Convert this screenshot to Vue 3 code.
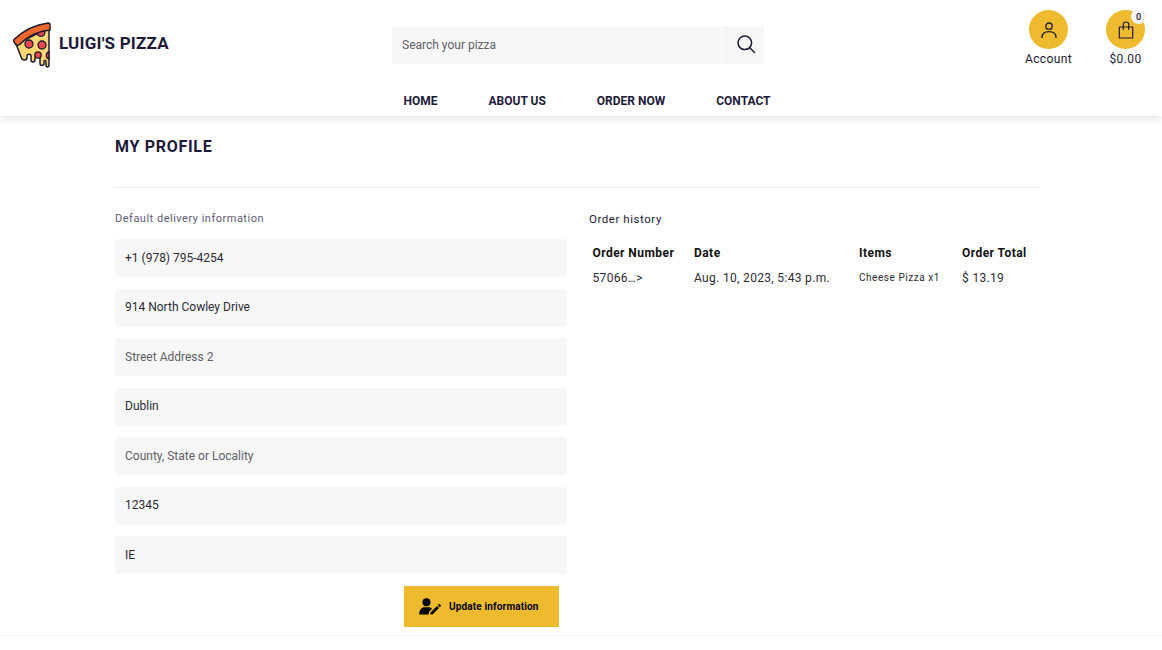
<script setup>
import { ref } from "vue"

const fields = ref([
  { value: "+1 (978) 795-4254", placeholder: "Phone number" },
  { value: "914 North Cowley Drive", placeholder: "Street Address 1" },
  { value: "", placeholder: "Street Address 2" },
  { value: "Dublin", placeholder: "Town or City" },
  { value: "", placeholder: "County, State or Locality" },
  { value: "12345", placeholder: "Postal Code" },
  { value: "IE", placeholder: "Country" },
])

const orders = [
  { number: "57066…>", date: "Aug. 10, 2023, 5:43 p.m.", items: "Cheese Pizza x1", total: "$ 13.19" },
]
</script>

<template>
  <div class="page">
    <header class="header">
      <div class="topRow">
        <a class="logo">
          <svg class="logoIcon" viewBox="0 0 38 46" width="38" height="46">
            <path d="M3 22 L36 6 V43 C36 45.5 33 45.5 33 43 V40 C33 37.5 31 37.5 31 40 V41.5 C31 44 27 44 27 41.5 V36 C27 33 22 33 22 36 V38 C22 40.5 18 40.5 18 38 V34 C18 31.5 14 31.5 14 34 V36 C14 38.5 9 38.5 8.5 36 Z" fill="#fbd872" stroke="#1e1b33" stroke-width="1.5" stroke-linejoin="round" />
            <circle cx="28" cy="10.5" r="3.8" fill="#e8484f" stroke="#1e1b33" stroke-width="1.3" />
            <circle cx="16" cy="22" r="4" fill="#e8484f" stroke="#1e1b33" stroke-width="1.3" />
            <circle cx="29" cy="23" r="4" fill="#e8484f" stroke="#1e1b33" stroke-width="1.3" />
            <circle cx="25" cy="33" r="3.2" fill="#e8484f" stroke="#1e1b33" stroke-width="1.3" />
            <path d="M36 30 A3.6 3.6 0 0 0 36 37 Z" fill="#e8484f" stroke="#1e1b33" stroke-width="1.3" />
            <path d="M1 17.5 C10 9 23 2.5 35 1 Q37 1 37 3 V8 C26 9 15 14 6.5 22.5 C5.5 23.5 4 23.5 3 22.5 L1 20 Q0.5 18.5 1 17.5 Z" fill="#f0672c" stroke="#1e1b33" stroke-width="1.5" stroke-linejoin="round" />
          </svg>
          <span class="logoText">LUIGI'S PIZZA</span>
        </a>

        <form class="search" @submit.prevent>
          <input class="searchInput" type="text" placeholder="Search your pizza" />
          <button class="searchBtn" type="button" aria-label="Search">
            <svg viewBox="0 0 20 20" width="20" height="20" fill="none" stroke="#1e1b33" stroke-width="1.5" stroke-linecap="round">
              <circle cx="8.8" cy="8.8" r="6.8" />
              <path d="M13.8 13.8 L18.5 18.5" />
            </svg>
          </button>
        </form>

        <div class="userLinks">
          <a class="userLink">
            <span class="circle">
              <svg viewBox="0 0 18 18" width="18" height="18" fill="none" stroke="#1e1b33" stroke-width="1.3" stroke-linecap="round">
                <circle cx="9" cy="5.2" r="3.2" />
                <path d="M2 16.5 C2 12.5 5 10.6 9 10.6 C13 10.6 16 12.5 16 16.5" />
              </svg>
            </span>
            <span class="linkText">Account</span>
          </a>
          <a class="userLink">
            <span class="circle">
              <svg viewBox="0 0 18 18" width="18" height="18" fill="none" stroke="#1e1b33" stroke-width="1.2" stroke-linejoin="round">
                <path d="M2.3 6 H15.7 V17 H2.3 Z" />
                <path d="M6.3 9 V3.6 C6.3 2 7.4 1 9 1 C10.6 1 11.7 2 11.7 3.6 V9" />
              </svg>
              <span class="badge">0</span>
            </span>
            <span class="linkText">$0.00</span>
          </a>
        </div>
      </div>

      <nav class="nav">
        <a>HOME</a>
        <a>ABOUT US</a>
        <a>ORDER NOW</a>
        <a>CONTACT</a>
      </nav>
    </header>

    <main class="main">
      <h2 class="title">MY PROFILE</h2>
      <hr class="divider" />
      <div class="columns">
        <section class="left">
          <p class="leftLabel">Default delivery information</p>
          <form class="profileForm" @submit.prevent>
            <input
              v-for="f in fields"
              :key="f.placeholder"
              v-model="f.value"
              class="field"
              type="text"
              :placeholder="f.placeholder"
            />
            <div class="btnRow">
              <button class="updateBtn" type="submit">
                <svg viewBox="0 0 22 17" width="22" height="17" fill="#000">
                  <circle cx="7.5" cy="4.2" r="4" />
                  <path d="M0.2 16.5 C0.2 12 2.6 9.3 5.5 9.3 L9.5 9.3 C10.8 9.3 12 9.8 13 10.7 L10.2 13.6 L9.6 16.5 Z" />
                  <path d="M11.3 16.5 L11.8 14.2 L18 8 L20 10 L13.8 16.2 Z" />
                  <path d="M18.8 7.2 L19.8 6.2 C20.1 5.9 20.5 5.9 20.8 6.2 L21.8 7.2 C22 7.5 22 7.9 21.8 8.2 L20.8 9.2 Z" />
                </svg>
                <span>Update information</span>
              </button>
            </div>
          </form>
        </section>

        <section class="right">
          <p class="rightLabel">Order history</p>
          <table class="orders">
            <thead>
              <tr>
                <th class="colNumber">Order Number</th>
                <th class="colDate">Date</th>
                <th class="colItems">Items</th>
                <th>Order Total</th>
              </tr>
            </thead>
            <tbody>
              <tr v-for="o in orders" :key="o.number">
                <td>{{ o.number }}</td>
                <td>{{ o.date }}</td>
                <td class="itemsCell">{{ o.items }}</td>
                <td>{{ o.total }}</td>
              </tr>
            </tbody>
          </table>
        </section>
      </div>
    </main>
    <div class="footerLine"></div>
  </div>
</template>

<style>
html, body {
  margin: 0;
  background: #fff;
}
</style>

<style scoped>
.page {
  height: 650px;
  overflow: hidden;
  font-family: Roboto, "Liberation Sans", sans-serif;
  color: #1c1a38;
  background: #fff;
}
.header {
  height: 116px;
  box-sizing: border-box;
  box-shadow: 0 2px 10px rgba(0, 0, 0, 0.12);
  position: relative;
  background: #fff;
}
.topRow {
  height: 84px;
  display: grid;
  grid-template-columns: 392px 372px 1fr;
  align-items: start;
}
.logo {
  display: flex;
  align-items: center;
  gap: 8px;
  padding: 22px 0 0 13px;
}
.logoIcon {
  flex: none;
}
.logoText {
  font-size: 17px;
  font-weight: 700;
  letter-spacing: 0.2px;
  padding-bottom: 5px;
}
.search {
  display: flex;
  height: 38px;
  margin-top: 26px;
  background: #f7f7f7;
}
.searchInput {
  flex: 1;
  min-width: 0;
  border: none;
  outline: none;
  background: none;
  padding: 0 10px;
  font-family: inherit;
  font-size: 12px;
}
.searchInput::placeholder {
  color: #5f6069;
  opacity: 1;
}
.searchBtn {
  width: 38px;
  border: none;
  border-left: 1px solid #f0f0f0;
  background: none;
  padding: 0 0 2px;
  display: flex;
  align-items: center;
  justify-content: center;
}
.userLinks {
  display: flex;
  justify-content: flex-end;
  gap: 30px;
  padding: 10px 13px 0 0;
}
.userLink {
  display: flex;
  flex-direction: column;
  align-items: center;
  gap: 3px;
  width: 47px;
}
.circle {
  position: relative;
  width: 39px;
  height: 39px;
  border-radius: 50%;
  background: #eebb2e;
  display: flex;
  align-items: center;
  justify-content: center;
}
.badge {
  position: absolute;
  top: -1px;
  right: -1px;
  width: 15px;
  height: 15px;
  border-radius: 50%;
  background: #f4f4f4;
  font-size: 9px;
  font-weight: 500;
  display: flex;
  align-items: center;
  justify-content: center;
}
.linkText {
  font-size: 12px;
  letter-spacing: 0.4px;
  line-height: 14px;
  white-space: nowrap;
}
.nav {
  display: flex;
  justify-content: center;
  gap: 51px;
  padding: 10px 0 0 12px;
  font-size: 12px;
  font-weight: 700;
  line-height: 14px;
}
.main {
  width: 925px;
  margin-left: 115px;
}
.title {
  margin: 0;
  padding-top: 21px;
  font-size: 16px;
  line-height: 19px;
  font-weight: 700;
  letter-spacing: 0.7px;
}
.divider {
  margin: 31px 0 0;
  border: none;
  border-top: 1px solid #eeeeee;
}
.columns {
  display: grid;
  grid-template-columns: 452px 451px;
  gap: 22px;
}
.leftLabel {
  margin: 0;
  padding-top: 24px;
  font-size: 11px;
  line-height: 13px;
  letter-spacing: 0.5px;
  color: #5f5b73;
}
.profileForm {
  display: flex;
  flex-direction: column;
  gap: 11.5px;
  margin-top: 14px;
}
.field {
  height: 38px;
  box-sizing: border-box;
  border: none;
  outline: none;
  border-radius: 3px;
  background: #f7f7f7;
  padding: 0 10px 0.5px;
  font-family: inherit;
  font-size: 12px;
  color: #2b2b33;
}
.field::placeholder {
  color: #5f6069;
  opacity: 1;
}
.btnRow {
  display: flex;
  justify-content: flex-end;
  padding-right: 8px;
  margin-top: 0.5px;
}
.updateBtn {
  width: 155px;
  height: 41px;
  border: none;
  background: #eebb2e;
  display: flex;
  align-items: center;
  gap: 8px;
  padding: 0 0 0 15px;
  font-family: inherit;
  font-size: 10px;
  font-weight: 700;
  letter-spacing: 0.15px;
  color: #000;
}
.rightLabel {
  margin: 0;
  padding-top: 25px;
  font-size: 11.5px;
  line-height: 13px;
  letter-spacing: 0.55px;
}
.orders {
  border-collapse: collapse;
  margin-top: 20px;
  font-size: 12px;
  letter-spacing: 0.45px;
  table-layout: fixed;
  width: 451px;
}
.orders th {
  text-align: left;
  font-weight: 700;
  padding: 0 0 0 3.5px;
  height: 14px;
  line-height: 14px;
  color: #111;
}
.orders td {
  padding: 11px 0 0 3.5px;
  line-height: 14px;
  letter-spacing: 0.33px;
  color: #2b2b33;
}
.colNumber {
  width: 98px;
}
.colDate {
  width: 161.5px;
}
.colItems {
  width: 99.5px;
}
.orders .itemsCell {
  font-size: 10px;
  letter-spacing: 0.55px;
}
.footerLine {
  position: absolute;
  top: 635px;
  left: 0;
  right: 0;
  border-top: 1px solid #f3f3f3;
}
</style>
